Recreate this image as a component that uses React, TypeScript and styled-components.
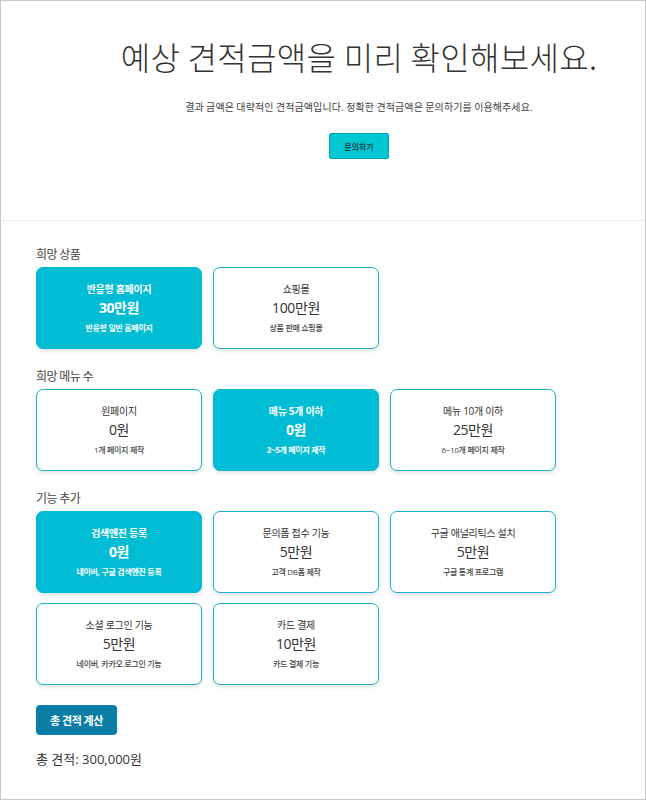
import { useState } from 'react';
import styled, { createGlobalStyle } from 'styled-components';

const GlobalStyle = createGlobalStyle`
  html, body {
    margin: 0;
    padding: 0;
    background: #ffffff;
  }
  body {
    font-family: "Open Sans", "Noto Sans CJK KR", sans-serif;
    color: #333333;
  }
  * {
    box-sizing: border-box;
  }
`;

const Frame = styled.div`
  width: 646px;
  height: 800px;
  border: 1px solid #c6c6c6;
  overflow: hidden;
`;

const Hero = styled.header`
  height: 220px;
  padding: 35px 0 0 72px;
  border-bottom: 1px solid #ececec;
  display: flex;
  flex-direction: column;
  align-items: center;
`;

const Title = styled.h1`
  margin: 0;
  font-family: "Noto Sans CJK KR", sans-serif;
  font-size: 32px;
  line-height: 40px;
  font-weight: 300;
  letter-spacing: 0.3px;
  color: #333333;
`;

const Subtitle = styled.p`
  margin: 23px 0 0;
  font-family: "Noto Sans CJK KR", sans-serif;
  font-size: 10px;
  line-height: 16px;
  letter-spacing: 0.1px;
  color: #444444;
`;

const InquiryButton = styled.button`
  margin-top: 18px;
  width: 60px;
  height: 26px;
  border: 1px solid #00a7b3;
  border-radius: 2px;
  background: #00c8d2;
  font-family: "Noto Sans CJK KR", sans-serif;
  font-size: 8px;
  font-weight: 500;
  color: #1d2a2c;
  cursor: pointer;
  padding: 0;
`;

const Content = styled.main`
  padding: 24px 35px 0;
`;

const Section = styled.section`
  margin-bottom: 18px;
`;

const SectionLabel = styled.h2`
  margin: 0 0 4px;
  font-family: "Noto Sans CJK KR", sans-serif;
  font-size: 12px;
  line-height: 18px;
  font-weight: 400;
  letter-spacing: -0.5px;
  color: #444444;
`;

const CardGrid = styled.div`
  display: grid;
  grid-template-columns: repeat(3, 166px);
  column-gap: 11px;
  row-gap: 10px;
`;

const Card = styled.button<{ $active: boolean }>`
  height: 82px;
  padding: 0 0 2px;
  border: 1px solid ${(p) => (p.$active ? '#00bcd4' : '#19b4c6')};
  border-radius: 7px;
  background: ${(p) => (p.$active ? '#00bcd4' : '#ffffff')};
  color: ${(p) => (p.$active ? '#ffffff' : '#333333')};
  box-shadow: 0 2px 4px rgba(0, 0, 0, 0.12);
  display: flex;
  flex-direction: column;
  align-items: center;
  justify-content: center;
  font-family: "Open Sans", "Noto Sans CJK KR", sans-serif;
  cursor: pointer;
`;

const CardTitle = styled.span<{ $active: boolean }>`
  font-size: 10px;
  line-height: 16px;
  letter-spacing: -0.3px;
  font-weight: ${(p) => (p.$active ? 700 : 400)};
`;

const CardPrice = styled.span<{ $active: boolean }>`
  margin-top: 1px;
  font-size: 14px;
  line-height: 20px;
  letter-spacing: -0.4px;
  font-weight: ${(p) => (p.$active ? 700 : 400)};
`;

const CardDesc = styled.span<{ $active: boolean }>`
  margin-top: 4px;
  font-size: 8px;
  line-height: 12px;
  letter-spacing: -0.3px;
  font-weight: ${(p) => (p.$active ? 700 : 500)};
  color: ${(p) => (p.$active ? '#ffffff' : '#444444')};
`;

const CalcButton = styled.button`
  margin-top: 2px;
  width: 81px;
  height: 30px;
  border: none;
  border-radius: 4px;
  background: #0a7ea6;
  color: #ffffff;
  font-family: "Noto Sans CJK KR", sans-serif;
  font-size: 11px;
  font-weight: 700;
  letter-spacing: -0.4px;
  cursor: pointer;
  padding: 0;
`;

const TotalText = styled.p`
  margin: 14px 0 0;
  font-size: 13px;
  line-height: 20px;
  letter-spacing: 0;
  color: #333333;
`;

type Option = {
  title: string;
  price: number;
  desc: string;
};

const products: Option[] = [
  { title: '반응형 홈페이지', price: 30, desc: '반응형 일반 홈페이지' },
  { title: '쇼핑몰', price: 100, desc: '상품 판매 쇼핑몰' },
];

const menus: Option[] = [
  { title: '원페이지', price: 0, desc: '1개 페이지 제작' },
  { title: '메뉴 5개 이하', price: 0, desc: '2~5개 페이지 제작' },
  { title: '메뉴 10개 이하', price: 25, desc: '6~10개 페이지 제작' },
];

const features: Option[] = [
  { title: '검색엔진 등록', price: 0, desc: '네이버, 구글 검색엔진 등록' },
  { title: '문의폼 접수 기능', price: 5, desc: '고객 DB폼 제작' },
  { title: '구글 애널리틱스 설치', price: 5, desc: '구글 통계 프로그램' },
  { title: '소셜 로그인 기능', price: 5, desc: '네이버, 카카오 로그인 기능' },
  { title: '카드 결제', price: 10, desc: '카드 결제 기능' },
];

const formatPrice = (price: number) => (price === 0 ? '0원' : `${price}만원`);

const OptionCard = ({ item, active, onClick }: { item: Option; active: boolean; onClick: () => void }) => {
  return (
    <Card $active={active} onClick={onClick}>
      <CardTitle $active={active}>{item.title}</CardTitle>
      <CardPrice $active={active}>{formatPrice(item.price)}</CardPrice>
      <CardDesc $active={active}>{item.desc}</CardDesc>
    </Card>
  );
};

export default function App() {
  const [product, setProduct] = useState(0);
  const [menu, setMenu] = useState(1);
  const [picked, setPicked] = useState<number[]>([0]);
  const [total, setTotal] = useState(300000);

  const toggleFeature = (index: number) => {
    setPicked((prev) => (prev.includes(index) ? prev.filter((i) => i !== index) : [...prev, index]));
  };

  const onCalc = () => {
    const sum =
      products[product].price +
      menus[menu].price +
      picked.reduce((acc, i) => acc + features[i].price, 0);
    setTotal(sum * 10000);
  };

  return (
    <Frame>
      <GlobalStyle />
      <Hero>
        <Title>예상 견적금액을 미리 확인해보세요.</Title>
        <Subtitle>결과 금액은 대략적인 견적금액입니다. 정확한 견적금액은 문의하기를 이용해주세요.</Subtitle>
        <InquiryButton>문의하기</InquiryButton>
      </Hero>
      <Content>
        <Section>
          <SectionLabel>희망 상품</SectionLabel>
          <CardGrid>
            {products.map((item, i) => (
              <OptionCard key={item.title} item={item} active={product === i} onClick={() => setProduct(i)} />
            ))}
          </CardGrid>
        </Section>
        <Section>
          <SectionLabel>희망 메뉴 수</SectionLabel>
          <CardGrid>
            {menus.map((item, i) => (
              <OptionCard key={item.title} item={item} active={menu === i} onClick={() => setMenu(i)} />
            ))}
          </CardGrid>
        </Section>
        <Section>
          <SectionLabel>기능 추가</SectionLabel>
          <CardGrid>
            {features.map((item, i) => (
              <OptionCard key={item.title} item={item} active={picked.includes(i)} onClick={() => toggleFeature(i)} />
            ))}
          </CardGrid>
        </Section>
        <CalcButton onClick={onCalc}>총 견적 계산</CalcButton>
        <TotalText>총 견적: {total.toLocaleString('ko-KR')}원</TotalText>
      </Content>
    </Frame>
  );
}
